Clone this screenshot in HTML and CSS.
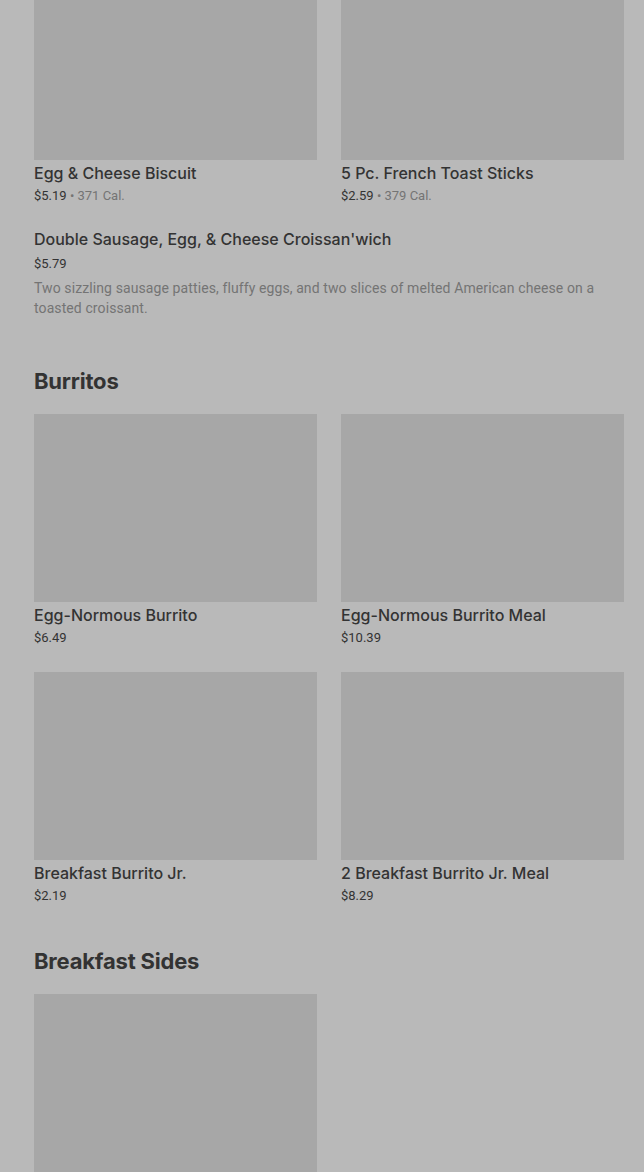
FILE: index.html
```html
<!DOCTYPE html>
<html lang="en">
<head>
    <meta charset="UTF-8">
    <meta name="viewport" content="width=device-width, initial-scale=1.0">
    <title>Breakfast Menu</title>
    <link rel="stylesheet" href="styles.css">
</head>
<body>
    <div class="menu">
        <section class="menu-section first">
            <div class="item-grid">
                <div class="item-card">
                    <div class="item-img"></div>
                    <div class="item-name">Egg &amp; Cheese Biscuit</div>
                    <div class="item-price">$5.19 <span class="cal">• 371 Cal.</span></div>
                </div>
                <div class="item-card">
                    <div class="item-img"></div>
                    <div class="item-name">5 Pc. French Toast Sticks</div>
                    <div class="item-price">$2.59 <span class="cal">• 379 Cal.</span></div>
                </div>
            </div>
            <div class="item-row">
                <div class="item-name">Double Sausage, Egg, &amp; Cheese Croissan'wich</div>
                <div class="item-price">$5.79</div>
                <p class="item-desc">Two sizzling sausage patties, fluffy eggs, and two slices of melted American cheese on a toasted croissant.</p>
            </div>
        </section>

        <section class="menu-section">
            <h2>Burritos</h2>
            <div class="item-grid">
                <div class="item-card">
                    <div class="item-img"></div>
                    <div class="item-name">Egg-Normous Burrito</div>
                    <div class="item-price">$6.49</div>
                </div>
                <div class="item-card">
                    <div class="item-img"></div>
                    <div class="item-name">Egg-Normous Burrito Meal</div>
                    <div class="item-price">$10.39</div>
                </div>
                <div class="item-card">
                    <div class="item-img"></div>
                    <div class="item-name">Breakfast Burrito Jr.</div>
                    <div class="item-price">$2.19</div>
                </div>
                <div class="item-card">
                    <div class="item-img"></div>
                    <div class="item-name">2 Breakfast Burrito Jr. Meal</div>
                    <div class="item-price">$8.29</div>
                </div>
            </div>
        </section>

        <section class="menu-section">
            <h2>Breakfast Sides</h2>
            <div class="item-grid">
                <div class="item-card">
                    <div class="item-img"></div>
                </div>
            </div>
        </section>
    </div>
</body>
</html>
```

FILE: styles.css
```css
body {
    font-family: Roboto, 'Liberation Sans', sans-serif;
    margin: 0;
    background-color: #b9b9b9;
    color: #333;
    overflow: hidden;
}

.menu {
    padding: 0 20px 0 34px;
}

.menu-section {
    margin-bottom: 41px;
}

.menu-section.first {
    margin-top: -28px;
}

.menu-section h2 {
    font-family: Inter, Roboto, sans-serif;
    font-size: 22px;
    line-height: 28px;
    font-weight: 700;
    letter-spacing: -0.2px;
    margin: 0 0 19px;
    color: #333;
}

.item-grid {
    display: grid;
    grid-template-columns: 1fr 1fr;
    column-gap: 24px;
    row-gap: 24px;
}

.item-img {
    height: 188px;
    background-color: #a7a7a7;
}

.item-name {
    font-family: Inter, Roboto, sans-serif;
    font-size: 16px;
    line-height: 22px;
    font-weight: 500;
    margin-top: 2px;
}

.item-price {
    font-size: 13px;
    line-height: 20px;
    margin-top: 2px;
    color: #333;
}

.cal {
    color: #747474;
}

.item-row {
    margin-top: 22px;
    padding-bottom: 8px;
}

.item-row .item-price {
    margin-top: 4px;
}

.item-desc {
    font-size: 14px;
    line-height: 20px;
    color: #747474;
    margin: 4px 0 0;
    letter-spacing: 0.1px;
}
```
